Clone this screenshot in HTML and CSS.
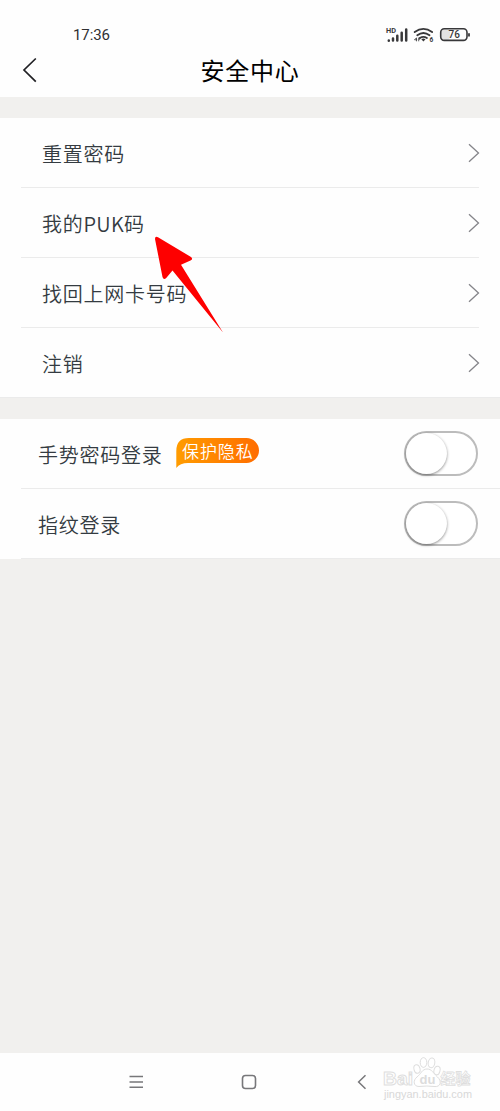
FILE: index.html
```html
<!DOCTYPE html>
<html lang="zh-CN">
<head>
<meta charset="utf-8">
<title>安全中心</title>
<link rel="stylesheet" href="styles.css">
</head>
<body>
<div class="screen">
  <header class="top">
    <div class="status">
      <span class="time">17:36</span>
      <svg class="status-icons" width="90" height="20" viewBox="0 0 90 20">
        <text class="hd" x="1" y="8.2" textLength="10" lengthAdjust="spacingAndGlyphs">HD</text>
        <g stroke="#38383a" stroke-width="2.5" stroke-linecap="round">
          <path d="M3.8 15.7v-.3M8 15.6v-2M12.3 15.6v-4.8M16.7 15.6V7.8M21.2 15.6V4.5"/>
        </g>
        <g fill="none" stroke="#38383a" stroke-width="1.8" stroke-linecap="round">
          <path d="M29.7 7.1q8.700-6.300 17.400 0M32.3 10.300q6.100-4.600 12.200 0M34.900 13q3.500-2.300 7 0"/>
        </g>
        <path d="M36.3 14.2q2.100-1.300 4.200 0L38.400 16.600z" fill="#38383a"/>
        <path d="M29.500 14.800h2.700m-.7-2v3.500m-2-1.500 2-2M33.700 16.300v-3.500h1.100v1.500h-1" fill="none" stroke="#38383a" stroke-width=".8"/>
        <text class="wifi-num" x="44.500" y="17">6</text>
        <rect x="56" y="4.200" width="9" height="10.500" rx="3" fill="#e2e2e2"/>
        <rect x="55.700" y="3.800" width="26.300" height="11.600" rx="3.600" fill="none" stroke="#38383a" stroke-width="1.600"/>
        <path d="M84 8.200v3.300" stroke="#38383a" stroke-width="1.800"/>
        <text class="battery" x="63.500" y="13.300">76</text>
      </svg>
    </div>
    <div class="titlebar">
      <svg class="back" width="16" height="26" viewBox="0 0 16 26"><path d="M13.800 1.500 2 13l11.800 11.700" fill="none" stroke="#202024" stroke-width="1.700"/></svg>
      <h1 class="title">安全中心</h1>
    </div>
  </header>

  <main class="content">
    <section class="group">
      <div class="row"><span>重置密码</span><svg class="chevron" viewBox="0 0 12 20"><path d="m1 1.200 9.500 8.800L1 18.800"/></svg></div>
      <div class="row"><span>我的<span class="latin">PUK</span>码</span><svg class="chevron" viewBox="0 0 12 20"><path d="m1 1.200 9.500 8.800L1 18.800"/></svg></div>
      <div class="row"><span>找回上网卡号码</span><svg class="chevron" viewBox="0 0 12 20"><path d="m1 1.200 9.500 8.800L1 18.800"/></svg></div>
      <div class="row"><span>注销</span><svg class="chevron" viewBox="0 0 12 20"><path d="m1 1.200 9.500 8.800L1 18.800"/></svg></div>
    </section>
    <section class="group toggles">
      <div class="row">
        <span>手势密码登录</span>
        <span class="badge">
          <svg class="badge-shape" width="84" height="31" viewBox="0 0 84 31">
            <defs><linearGradient id="orange"><stop stop-color="#ff9c00"/><stop offset="1" stop-color="#ff6d00"/></linearGradient></defs>
            <path d="M.3 30V13Q.3 0 13 0H70.500a12.500 12.500 0 0 1 0 25H12Q4 25 .3 30Z" fill="url(#orange)"/>
          </svg>
          <span class="badge-text">保护隐私</span>
        </span>
        <span class="switch"><span class="knob"></span></span>
      </div>
      <div class="row">
        <span>指纹登录</span>
        <span class="switch"><span class="knob"></span></span>
      </div>
    </section>
    <svg class="pointer" width="72" height="98" viewBox="0 0 72 98">
      <path d="M1 3Q1-.3 4 1.200L37 21Q39.500 23 36.500 24.500L27 28.800 69 96.500 18.500 34.500 12 42.200Q9.500 44 8.500 41Z" fill="#fe0000"/>
    </svg>
  </main>

  <nav class="nav">
    <svg class="nav-menu" width="15" height="14" viewBox="0 0 15 14"><path d="M.5 1.500h13.500M.5 7h13.500M.5 12.300h13.500" stroke="#77777a" stroke-width="1.400"/></svg>
    <svg class="nav-home" width="16" height="16" viewBox="0 0 16 16"><rect x="1.500" y="1.500" width="13" height="13" rx="3" fill="none" stroke="#77777a" stroke-width="1.600"/></svg>
    <svg class="nav-back" width="10" height="16" viewBox="0 0 10 16"><path d="M8.500 1.300 1.600 8l6.900 6.700" fill="none" stroke="#77777a" stroke-width="1.500"/></svg>
    <svg class="watermark" width="94" height="48" viewBox="0 0 94 48">
      <g fill="#fff" stroke="#dedede" stroke-width="1">
        <text class="wm-brand" x="2" y="31" textLength="30" lengthAdjust="spacingAndGlyphs">Bai</text>
        <ellipse cx="36" cy="15" rx="3" ry="4.300" transform="rotate(-15 36 15)"/>
        <ellipse cx="42.500" cy="8.500" rx="3.300" ry="4.900"/>
        <ellipse cx="50.500" cy="8.800" rx="3.300" ry="4.900" transform="rotate(10 50.500 8.800)"/>
        <ellipse cx="56" cy="16.500" rx="3" ry="4.300" transform="rotate(15 56 16.500)"/>
        <path d="M46 15C41 15 40 20 36 23S32 32.500 38 32.500q8-1 15 0c7 1 8-5.500 3.500-9.500S51 15 46 15Z"/>
        <text class="wm-cn" x="59.500" y="30">经验</text>
      </g>
      <text class="wm-du" x="38.500" y="30">du</text>
      <text class="wm-url" x="3" y="43.500" textLength="88" lengthAdjust="spacingAndGlyphs">jingyan.baidu.com</text>
    </svg>
  </nav>
</div>
</body>
</html>
```
FILE: styles.css
```css
* { box-sizing: border-box; }
body {
  margin: 0;
  background: #fff;
  font-family: "Noto Sans CJK SC", sans-serif;
}
.screen {
  width: 500px;
  height: 1111px;
  display: flex;
  flex-direction: column;
  overflow: hidden;
}
.top { height: 97px; background: #fefefe; }
.status {
  height: 44px;
  padding: 25px 28px 0 73px;
  display: flex;
  justify-content: space-between;
}
.time {
  font: 15px/20px Roboto, sans-serif;
  letter-spacing: -.1px;
  color: #303032;
}
.status-icons { display: block; margin-right: -3px; }
.hd { font: 700 6.5px Roboto, sans-serif; fill: #38383a; }
.wifi-num { font: 700 6.5px Roboto, sans-serif; fill: #38383a; }
.battery { font: 500 10px Roboto, sans-serif; fill: #38383a; }
.titlebar {
  height: 51px;
  display: grid;
  grid-template-columns: 60px 1fr 60px;
  align-items: center;
}
.back { margin-left: 22px; }
.title {
  margin: 0;
  text-align: center;
  font-size: 24px;
  line-height: 36px;
  font-weight: 400;
  letter-spacing: .8px;
  color: #000;
}
.content {
  position: relative;
  flex: 1;
  padding-top: 21px;
  background: #f1f0ee;
}
.group { background: #fefefe; margin-bottom: 21px; }
.row {
  height: 70px;
  display: flex;
  align-items: center;
  padding: 0 20px 0 42px;
  font-size: 20px;
  font-weight: 350;
  line-height: 30px;
  letter-spacing: .75px;
  color: #343b41;
  background: linear-gradient(#ebebeb, #ebebeb) 21px 100% / 458px 1px no-repeat;
}
.row > span:first-child { padding-top: 2px; }
.latin { letter-spacing: .3px; }
.group:first-child .row:last-child { background-position: 0 100%; background-size: 500px 1px; }
.chevron {
  width: 12px;
  height: 20px;
  margin-left: auto;
  fill: none;
  stroke: #85858a;
  stroke-width: 1.300;
}
.toggles .row { padding: 0 22px 0 38px; background-size: 479px 1px; }
.badge {
  position: relative;
  width: 84px;
  height: 31px;
  margin: 0 0 2px 13.5px;
}
.badge-shape { display: block; }
.badge-text {
  position: absolute;
  left: 6px;
  top: 0;
  font-size: 17px;
  line-height: 25px;
  font-weight: 350;
  letter-spacing: .9px;
  color: #fff;
  white-space: nowrap;
}
.switch {
  width: 74px;
  height: 45px;
  margin: 0 0 1px auto;
  border: 2px solid #bcbcbc;
  border-radius: 23px;
  background: #fff;
}
.knob {
  display: block;
  width: 41px;
  height: 41px;
  border-radius: 50%;
  background: #fff;
  box-shadow: 0 1px 3px rgba(0, 0, 0, .45);
}
.pointer { position: absolute; left: 154px; top: 139px; }
.nav {
  height: 58px;
  display: flex;
  align-items: center;
  background: #fefefe;
}
.nav-menu { margin-left: 128.5px; }
.nav-home { margin-left: 97px; }
.nav-back { margin-left: 100.5px; }
.watermark { margin: 0 0 8px 14px; }
.wm-brand { font: 700 19px "Liberation Sans", sans-serif; }
.wm-cn { font: 700 15px "Noto Sans CJK SC", sans-serif; stroke-width: .8px; }
.wm-du { font: 700 13px "Liberation Sans", sans-serif; fill: #dcdcdc; }
.wm-url { font: 10px "Liberation Sans", sans-serif; fill: #d8d8d8; }
```
